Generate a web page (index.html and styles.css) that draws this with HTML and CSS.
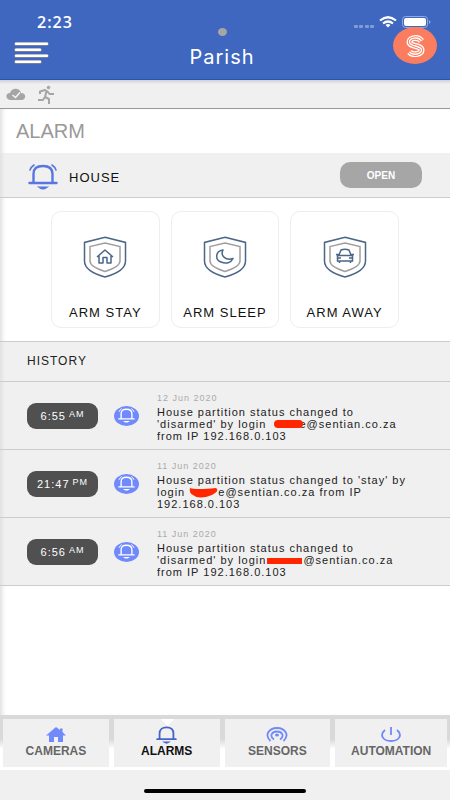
FILE: index.html
```html
<!DOCTYPE html>
<html lang="en">
<head>
<meta charset="utf-8">
<meta name="viewport" content="width=device-width, initial-scale=1">
<title>Parish</title>
<link rel="stylesheet" href="styles.css">
</head>
<body>
<svg class="defs" aria-hidden="true">
  <symbol id="bell" viewBox="0 0 30 26">
    <g fill="none" stroke="currentColor" stroke-width="2.600" stroke-linecap="round">
      <path d="M5 19V11C5 5 9 2 15 2s10 3 10 9v8M1.500 19h27"/>
      <path d="M12 23.500q3 2 6 0z" fill="currentColor" stroke-width="2"/>
    </g>
  </symbol>
  <symbol id="ringing" viewBox="0 0 30 26">
    <g fill="none" stroke="currentColor" stroke-width="2.400" stroke-linecap="round">
      <path d="M5.500 18V10C5.500 4 9 2 15 2s9.500 2 9.500 8v8M1.500 19h27"/>
      <path d="M12 23.500q3 2 6 0z" fill="currentColor" stroke-width="2"/>
      <path d="M2 6q1-3 4-5M28 6q-1-3-4-5" stroke-width="1.600"/>
    </g>
  </symbol>
  <symbol id="shield" viewBox="0 0 44 42">
    <path d="M22 1.200L42.500 6.400V25C42.500 33 33 38 22 41C11 38 1.500 33 1.500 25V6.400z" fill="none" stroke="#4b6686" stroke-width="1.500"/>
    <path d="M22 7L37 10.500V25C37 29.500 30 33 22 35.500C14 33 7 29.500 7 25V10.500z" fill="none" stroke="#a0a0a0" stroke-width="1.500"/>
  </symbol>
</svg>

<header class="header">
  <div class="status">
    <time class="clock">2:23</time>
    <span class="signals">
      <svg width="20" height="4" viewBox="0 0 20 4" fill="#829cd7"><rect y="1" width="4" height="3" rx="1"/><rect x="5" y="1" width="4" height="3" rx="1"/><rect x="11" y="1" width="4" height="3" rx="1"/><rect x="16" y="1" width="4" height="3" rx="1"/></svg>
      <svg width="18" height="12" viewBox="0 0 18 12" fill="none" stroke="#fff" stroke-width="2.200"><path d="M1 4.500Q9-2 17 4.500M4 7.500Q9 3.500 14 7.500"/><path d="M6.500 9Q9 7 11.500 9L9 11.500z" fill="#fff" stroke="none"/></svg>
      <svg width="30" height="12" viewBox="0 0 30 12"><rect x=".5" y=".5" width="25" height="11" rx="3" fill="none" stroke="#92a9dd"/><rect x="2" y="2" width="22" height="8" rx="2" fill="#fff"/><path d="M27 4q3 2 0 4z" fill="#92a9dd"/></svg>
    </span>
  </div>
  <span class="dot"></span>
  <button class="menu" aria-label="Menu">
    <svg width="38" height="24" viewBox="0 0 38 24" stroke-linecap="round"><g stroke="#8b8b8b" stroke-width="3.600"><path d="M4 3h31M4 9h24M4 15h31M4 21h24"/></g><g stroke="#fff" stroke-width="2.400"><path d="M4 2.700h31M4 8.700h24M4 14.700h31M4 20.700h24"/></g></svg>
  </button>
  <h1>Parish</h1>
  <a class="brand" href="#" aria-label="Sentian">
    <svg width="19" height="22" viewBox="0 0 19 22" fill="none">
      <path id="s" d="M15.500 6C12 1 3.500 3 3.500 7C3.500 12 15.500 10 15.500 15C15.500 19 7 21 3.500 17" stroke="#fff" stroke-width="6"/>
      <path d="M15.500 6C12 1 3.500 3 3.500 7C3.500 12 15.500 10 15.500 15C15.500 19 7 21 3.500 17" stroke="#fb7d5f" stroke-width="3.400"/>
      <path d="M15.500 6C12 1 3.500 3 3.500 7C3.500 12 15.500 10 15.500 15C15.500 19 7 21 3.500 17" stroke="#fff" stroke-width="1.300"/>
    </svg>
  </a>
</header>

<div class="tools">
  <svg width="20" height="14" viewBox="0 0 20 14"><path d="M5 12C-1 12-1 5 4 5C6-1 14 0 15 5C21 5 20 12 15.500 12z" fill="#a5a5a5"/><path d="M6.500 7l3 2.500 4.500-5" fill="none" stroke="#f4f4f4" stroke-width="1.500"/></svg>
  <svg width="18" height="20" viewBox="0 0 18 20" fill="none" stroke="#a5a5a5" stroke-width="2"><circle cx="11.500" cy="2.500" r="1.300" fill="#a5a5a5" stroke-width="1"/><path d="M3 9V6.500L8 5l2.500 1.500 2 2.500H17M9.500 6L8 12l4 2v5M8 12l-2 3H1" stroke-linejoin="round"/></svg>
</div>

<main>
  <h2 class="title">ALARM</h2>
  <section class="house">
    <svg class="house-bell" width="30" height="26"><use href="#ringing"/></svg>
    <h3>HOUSE</h3>
    <button class="open">OPEN</button>
  </section>
  <section class="modes">
    <button class="mode">
      <svg width="44" height="42" viewBox="0 0 44 42"><use href="#shield"/><path d="M14 21l8-7 8 7M16 20v7h4v-5.500h4V27h4v-7" fill="none" stroke="#4b6686" stroke-width="1.500" stroke-linejoin="round"/></svg>
      <span>ARM STAY</span>
    </button>
    <button class="mode">
      <svg width="44" height="42" viewBox="0 0 44 42"><use href="#shield"/><path d="M20 14C12 15 12 24 18 26C23 28 28 27 30 22.500C23 25 17 20 20 14z" fill="none" stroke="#4b6686" stroke-width="1.500" stroke-linejoin="round"/></svg>
      <span>ARM SLEEP</span>
    </button>
    <button class="mode">
      <svg width="44" height="42" viewBox="0 0 44 42"><use href="#shield"/><g fill="none" stroke="#4b6686" stroke-width="1.500"><path d="M16 19l2-5q4-1.500 8 0l2 5M14.500 19.500h15v5.500h-15zM13 18.500h2.500M28.500 18.500H31M16.500 25v2M27.500 25v2M15 22h3M26 22h3"/></g></svg>
      <span>ARM AWAY</span>
    </button>
  </section>

  <section class="history">
    <h3>HISTORY</h3>
    <ul>
      <li>
        <time class="pill">6:55<small>AM</small></time>
        <span class="badge"><svg width="17" height="15"><use href="#ringing"/></svg></span>
        <div class="event"><time>12 Jun 2020</time><p>House partition status changed to<br>'disarmed' by login <span class="redact">e<svg width="34" height="10" viewBox="0 0 34 10"><path d="M8 5H29" stroke="#ff2600" stroke-width="8" stroke-linecap="round"/></svg></span>@sentian.co.za<br>from IP 192.168.0.103</p></div>
      </li>
      <li>
        <time class="pill">21:47<small>PM</small></time>
        <span class="badge"><svg width="17" height="15"><use href="#ringing"/></svg></span>
        <div class="event"><time>11 Jun 2020</time><p>House partition status changed to 'stay' by<br>login <span class="redact">e<svg width="31" height="12" viewBox="0 0 31 12"><path d="M1 1Q7 3 27 1Q31 4 23 8Q10 13 4 8Q0 6 1 1z" fill="#ff2600"/></svg></span>@sentian.co.za from IP<br>192.168.0.103</p></div>
      </li>
      <li>
        <time class="pill">6:56<small>AM</small></time>
        <span class="badge"><svg width="17" height="15"><use href="#ringing"/></svg></span>
        <div class="event"><time>11 Jun 2020</time><p>House partition status changed to<br>'disarmed' by login<span class="redact bar"><svg width="36" height="6" viewBox="0 0 36 6"><path d="M1 0h35v6H1z" fill="#ff2600"/></svg></span>@sentian.co.za<br>from IP 192.168.0.103</p></div>
      </li>
    </ul>
  </section>
</main>

<nav class="tabs">
  <a href="#"><svg width="20" height="15" viewBox="0 0 20 15"><path d="M10 0l4 3V1.500h2.500V5L20 8.500h-3V15h-5v-5H8v5H3V8.500H0z" fill="#7089fb"/></svg>CAMERAS</a>
  <a class="active" href="#" aria-current="page"><svg width="21" height="18"><use href="#bell"/></svg>ALARMS</a>
  <a href="#"><svg width="22" height="15" viewBox="0 0 22 15" fill="none" stroke="#7089fb" stroke-width="1.800"><ellipse cx="11" cy="8" rx="2" ry="1.600" fill="#7089fb" stroke="none"/><path d="M4.500 14C-2 8 3 1 11 1s13 7 6.500 13M8 12.500C3 9 6 4.500 11 4.500s8 4.500 3 8"/></svg>SENSORS</a>
  <a href="#"><svg width="20" height="15" viewBox="0 0 20 15" fill="none" stroke="#7089fb" stroke-width="1.800"><path d="M10 0v8M4 3C-2 8 2 14 10 14S22 8 16 3"/></svg>AUTOMATION</a>
</nav>
<footer><span></span></footer>
</body>
</html>
```

FILE: styles.css
```css
* { box-sizing: border-box; }

body {
  margin: 0;
  min-height: 100vh;
  display: flex;
  flex-direction: column;
  background: #fff;
  color: #222;
  font-family: "Liberation Sans", Arial, sans-serif;
}

h1, h2, h3, p, ul { margin: 0; padding: 0; font-weight: 400; }
ul { list-style: none; }
button { font: inherit; color: inherit; border: 0; padding: 0; background: none; }
a { color: inherit; text-decoration: none; }
svg { display: block; flex: none; }
.defs { position: absolute; width: 0; height: 0; }

.header {
  position: relative;
  height: 80px;
  padding-top: 12px;
  background: #4067bf;
  border-bottom: 1px solid #2457b3;
  color: #fff;
}
.status {
  display: flex;
  justify-content: space-between;
  align-items: center;
  height: 20px;
  padding: 0 18px 0 37px;
}
.clock { font: 600 16px/20px "Open Sans", sans-serif; letter-spacing: 1px; }
.signals { display: flex; align-items: center; gap: 5px; }
.signals svg:first-child { align-self: flex-end; }
.dot {
  position: absolute;
  top: 28px;
  left: calc(50% - 7px);
  width: 9px;
  height: 8px;
  border-radius: 50%;
  background: #a6a6a6;
}
.menu { position: absolute; top: 41px; left: 12px; }
h1 {
  margin-top: 14px;
  padding-right: 6px;
  text-align: center;
  font: 400 20px/22px Inter, sans-serif;
  letter-spacing: 1px;
}
.brand {
  position: absolute;
  top: 27px;
  right: 13px;
  width: 44px;
  height: 37px;
  display: grid;
  place-items: center;
  border-radius: 50%;
  background: #fb7d5f;
}

.tools {
  display: flex;
  align-items: center;
  gap: 11px;
  height: 29px;
  padding: 1px 6px 0;
  background: linear-gradient(#cfcfd8, #f0f0f0 4px);
  border-bottom: 1px solid #999;
}

main { flex: 1; box-shadow: inset 5px 0 5px -3px #ddd; }
.title { padding: 10px 16px; font-size: 20px; line-height: 24px; color: #999; }

.house {
  display: flex;
  align-items: center;
  height: 45px;
  padding: 0 28px;
  background: linear-gradient(to right, #e2e2e2, #f0f0f0 5px);
  border-bottom: 1px solid #ccc;
}
.house-bell { margin-top: 4px; color: #5975e2; }
.house h3 { margin: 4px auto 0 11px; font-size: 13px; letter-spacing: 1px; color: #111; }
.open {
  width: 82px;
  height: 26px;
  border-radius: 10px;
  background: #a6a6a6;
  color: #fff;
  font-size: 10px;
  font-weight: 700;
}

.modes {
  display: grid;
  grid-template-columns: repeat(3, 1fr);
  gap: 11px;
  padding: 13px 51px;
}
.mode {
  display: flex;
  flex-direction: column;
  align-items: center;
  justify-content: space-between;
  height: 117px;
  padding: 24px 0 7px;
  border: 1px solid #eee;
  border-radius: 10px;
  font-size: 13px;
  line-height: 15px;
  letter-spacing: 1px;
  color: #111;
}

.history {
  background: linear-gradient(to right, #e2e2e2, #f0f0f0 5px);
  border-top: 1px solid #ccc;
}
.history h3 {
  padding-left: 27px;
  font-size: 12px;
  line-height: 39px;
  letter-spacing: 1px;
}
.history li {
  display: flex;
  align-items: center;
  height: 68px;
  padding-left: 27px;
  border-top: 1px solid #ccc;
}
.history li:last-child { height: 69px; border-bottom: 1px solid #ccc; }
.pill {
  display: flex;
  justify-content: center;
  gap: 3px;
  width: 71px;
  height: 26px;
  border-radius: 9px;
  background: #505050;
  color: #fff;
  font-size: 11px;
  line-height: 26px;
  letter-spacing: 1px;
}
.pill small { font-size: 9px; line-height: 23px; }
.badge {
  display: grid;
  place-items: center;
  width: 25px;
  height: 20px;
  margin: 0 18px 0 16px;
  border-radius: 50%;
  background: #7089fb;
  color: #fff;
}
.event { padding-top: 2px; font-size: 11px; line-height: 12px; letter-spacing: 1px; white-space: nowrap; }
.event time { display: block; margin-bottom: 2px; font-size: 9px; color: #aaa; }
.redact { position: relative; display: inline-block; padding-left: 29px; }
.redact svg { position: absolute; left: 0; top: 1px; }
.redact.bar { width: 37px; height: 6px; padding: 0; }
.redact.bar svg { top: 0; }

.tabs {
  display: grid;
  grid-template-columns: 18fr 18fr 18fr 19fr;
  gap: 5px;
  padding: 4px 3px 3px;
  background: linear-gradient(#d9d9d9 24px, #fff 34px);
}
.tabs a {
  display: flex;
  flex-direction: column;
  align-items: center;
  gap: 2px;
  height: 48px;
  padding-top: 8px;
  background: #f0f0f0;
  font-size: 12px;
  font-weight: 700;
  line-height: 14px;
  color: #666;
}
.tabs .active {
  gap: 0;
  padding-top: 7px;
  background: conic-gradient(from -45deg at 50% 7px, #fff 90deg, #f0f0f0 0);
  color: #111;
}
.tabs .active svg { color: #4564cb; }

footer {
  display: flex;
  justify-content: center;
  height: 30px;
  padding-top: 19px;
  background: #f0f0f0;
}
footer span { width: 36%; height: 4px; border-radius: 2px; background: #000; }
```
